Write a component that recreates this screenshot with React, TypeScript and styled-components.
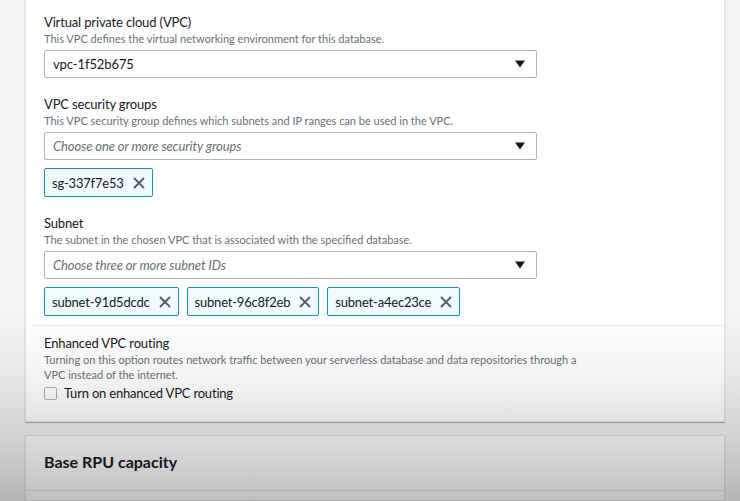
import React from "react";
import styled, { createGlobalStyle } from "styled-components";

const Global = createGlobalStyle`
  html, body { margin: 0; padding: 0; }
  body {
    background: #f2f3f3;
    font-family: Lato, "Open Sans", Arial, sans-serif;
    color: #16191f;
  }
`;

const Page = styled.div`
  position: relative;
  width: 740px;
  height: 501px;
  overflow: hidden;
  background: #f2f3f3;
  padding: 0 15px 0 25px;
  box-sizing: border-box;
  display: flex;
  flex-direction: column;
  gap: 13px;
  &::after {
    content: "";
    position: absolute;
    inset: 0;
    pointer-events: none;
    background: linear-gradient(
      to bottom,
      rgba(0, 0, 0, 0) 0px,
      rgba(0, 0, 0, 0) 310px,
      rgba(0, 0, 0, 0.05) 380px,
      rgba(0, 0, 0, 0.14) 440px,
      rgba(0, 0, 0, 0.25) 501px
    );
  }
`;

const Card = styled.section`
  background: #fff;
  border: 1px solid #e1e4e4;
  border-top: none;
  box-shadow: 0 1px 1px rgba(0, 31, 43, 0.3);
  display: flex;
  flex-direction: column;
`;

const CardBody = styled.div`
  padding: 13px 18px 0 18px;
  display: flex;
  flex-direction: column;
`;

const Field = styled.div<{ $last?: boolean }>`
  display: flex;
  flex-direction: column;
  margin-bottom: ${(p) => (p.$last ? "9px" : "17px")};
`;

const Label = styled.div`
  font-size: 13px;
  letter-spacing: -0.15px;
  line-height: 18px;
  color: #16191f;
`;

const Desc = styled.div`
  font-size: 11px;
  line-height: 15px;
  color: #687078;
  margin-bottom: 4px;
`;

const Select = styled.div<{ $placeholder?: boolean }>`
  width: 493px;
  height: 28px;
  box-sizing: border-box;
  border: 1px solid #aab7b8;
  border-radius: 2px;
  background: #fff;
  display: flex;
  align-items: center;
  justify-content: space-between;
  padding: 0 11px 0 8px;
  font-size: 13px;
  letter-spacing: -0.1px;
  color: ${(p) => (p.$placeholder ? "#687078" : "#16191f")};
  font-style: ${(p) => (p.$placeholder ? "italic" : "normal")};
`;

const Caret = () => (
  <svg width="10" height="8" viewBox="0 0 10 8">
    <path d="M0 0.5 L10 0.5 L5 7.5 Z" fill="#16191f" />
  </svg>
);

const Tokens = styled.div`
  display: flex;
  gap: 8px;
  margin-top: 8px;
`;

const Token = styled.div`
  height: 29px;
  box-sizing: border-box;
  border: 1px solid #1d8db3;
  border-radius: 2px;
  background: #f1faff;
  display: flex;
  align-items: center;
  gap: 9px;
  padding: 0 7px 0 7px;
  font-size: 13px;
  letter-spacing: -0.2px;
  color: #16191f;
`;

const Dismiss = () => (
  <svg width="12" height="12" viewBox="0 0 12 12">
    <path d="M1 1 L11 11 M11 1 L1 11" stroke="#545b64" strokeWidth="1.8" />
  </svg>
);

const Divider = styled.div`
  height: 1px;
  background: #eaeded;
  margin: 0 -18px 0 -12px;
`;

const Section = styled.div`
  padding: 8px 0 20px 0;
  display: flex;
  flex-direction: column;
`;

const RoutingDesc = styled(Desc)`
  width: 540px;
  margin-bottom: 3px;
`;

const CheckRow = styled.label`
  display: flex;
  align-items: center;
  gap: 7px;
  height: 16px;
  font-size: 13px;
  letter-spacing: -0.2px;
  color: #16191f;
`;

const Box = styled.span`
  width: 11px;
  height: 11px;
  border: 1px solid #aab7b8;
  border-radius: 2px;
  background: #fff;
  display: inline-block;
`;

const HeaderCard = styled.section`
  background: #fff;
  border: 1px solid #e1e4e4;
  box-shadow: 0 1px 1px rgba(0, 31, 43, 0.25);
  height: 80px;
  display: flex;
  flex-direction: column;
`;

const HeaderTitle = styled.h2`
  margin: 0;
  padding: 15px 18px 17px 18px;
  font-size: 16px;
  font-weight: 700;
  line-height: 22px;
  border-bottom: 1px solid #e4e7e7;
`;

export default function App() {
  return (
    <>
      <Global />
      <Page>
        <Card>
          <CardBody>
            <Field>
              <Label>Virtual private cloud (VPC)</Label>
              <Desc>This VPC defines the virtual networking environment for this database.</Desc>
              <Select>
                <span>vpc-1f52b675</span>
                <Caret />
              </Select>
            </Field>
            <Field>
              <Label>VPC security groups</Label>
              <Desc>This VPC security group defines which subnets and IP ranges can be used in the VPC.</Desc>
              <Select $placeholder>
                <span>Choose one or more security groups</span>
                <Caret />
              </Select>
              <Tokens>
                <Token>
                  sg-337f7e53 <Dismiss />
                </Token>
              </Tokens>
            </Field>
            <Field $last>
              <Label>Subnet</Label>
              <Desc>The subnet in the chosen VPC that is associated with the specified database.</Desc>
              <Select $placeholder>
                <span>Choose three or more subnet IDs</span>
                <Caret />
              </Select>
              <Tokens>
                <Token>
                  subnet-91d5dcdc <Dismiss />
                </Token>
                <Token>
                  subnet-96c8f2eb <Dismiss />
                </Token>
                <Token>
                  subnet-a4ec23ce <Dismiss />
                </Token>
              </Tokens>
            </Field>
            <Divider />
            <Section>
              <Label>Enhanced VPC routing</Label>
              <RoutingDesc>
                Turning on this option routes network traffic between your serverless database and data
                repositories through a VPC instead of the internet.
              </RoutingDesc>
              <CheckRow>
                <Box />
                Turn on enhanced VPC routing
              </CheckRow>
            </Section>
          </CardBody>
        </Card>
        <HeaderCard>
          <HeaderTitle>Base RPU capacity</HeaderTitle>
        </HeaderCard>
      </Page>
    </>
  );
}
